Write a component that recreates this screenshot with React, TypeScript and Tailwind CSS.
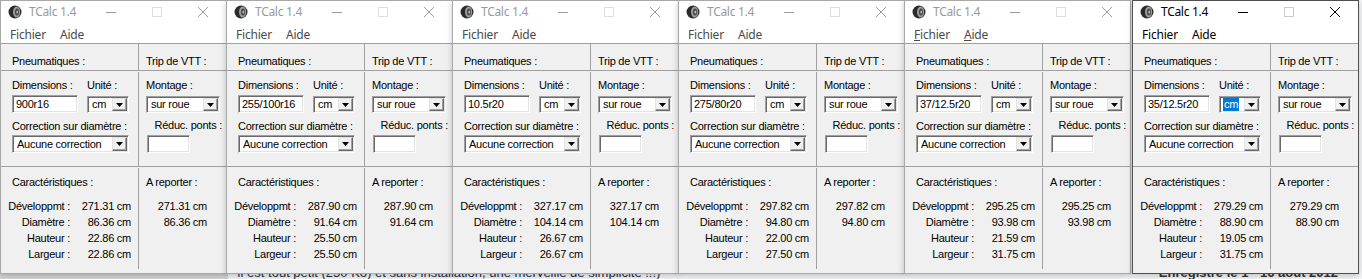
import clsx from 'clsx'

interface TyreWindow {
  dim: string
  dev: string
  diam: string
  haut: string
  larg: string
}

const windows: TyreWindow[] = [
  { dim: '900r16', dev: '271.31', diam: '86.36', haut: '22.86', larg: '22.86' },
  { dim: '255/100r16', dev: '287.90', diam: '91.64', haut: '25.50', larg: '25.50' },
  { dim: '10.5r20', dev: '327.17', diam: '104.14', haut: '26.67', larg: '26.67' },
  { dim: '275/80r20', dev: '297.82', diam: '94.80', haut: '22.00', larg: '27.50' },
  { dim: '37/12.5r20', dev: '295.25', diam: '93.98', haut: '21.59', larg: '31.75' },
  { dim: '35/12.5r20', dev: '279.29', diam: '88.90', haut: '19.05', larg: '31.75' },
]

const sunken =
  'border border-[#a0a0a0] border-b-white border-r-white bg-white shadow-[inset_1px_1px_0_#696969,inset_-1px_-1px_0_#e3e3e3]'

function TyreIcon() {
  return (
    <svg width="14" height="14" viewBox="0 0 14 14">
      <circle cx="7" cy="7" r="6.5" fill="#2a2a2a" />
      <ellipse cx="8.6" cy="7" rx="3.6" ry="5.6" fill="#9c9c9c" />
      <ellipse cx="9" cy="7" rx="2.1" ry="3.6" fill="#4a4a4a" />
      <ellipse cx="9.3" cy="7" rx="0.9" ry="1.6" fill="#bdbdbd" />
    </svg>
  )
}

function Arrow() {
  return (
    <div className="flex w-[15px] items-center justify-center border border-[#e3e3e3] border-b-[#696969] border-r-[#696969] bg-[#f0f0f0] shadow-[inset_-1px_-1px_0_#a0a0a0]">
      <svg width="7" height="4" viewBox="0 0 7 4">
        <path d="M0 0h7L3.5 4z" fill="#000" />
      </svg>
    </div>
  )
}

function Select({ value, width, height, focused }: { value: string; width: string; height: string; focused?: boolean }) {
  return (
    <div className={clsx('flex p-px', sunken, width, height)}>
      <div className="flex flex-1 items-center pl-[2px]">
        <span className={clsx('px-[1px] leading-[13px]', focused && 'bg-[#0078d7] text-white')}>{value}</span>
      </div>
      <Arrow />
    </div>
  )
}

function VLine() {
  return <div className="w-[2px] shrink-0 border-l border-[#a0a0a0] border-r-white" />
}

function HLine() {
  return <div className="h-[2px] shrink-0 border-t border-[#a0a0a0] border-b-white" />
}

function Window({ w, active, mnemonics, className }: { w: TyreWindow; active?: boolean; mnemonics?: boolean; className?: string }) {
  const rows = [
    ['Développmt :', w.dev],
    ['Diamètre :', w.diam],
    ['Hauteur :', w.haut],
    ['Largeur :', w.larg],
  ]

  return (
    <div
      className={clsx(
        'flex h-[274px] w-[227px] shrink-0 flex-col border bg-white shadow-[0_2px_6px_rgba(0,0,0,0.22)]',
        active ? 'border-[#505050]' : 'border-[#a8a8a8]',
        className,
      )}
    >
      {/* Title bar */}
      <div className="flex h-[22px] items-center font-['Noto_Sans',sans-serif] text-[12px] tracking-[-0.3px]">
        <div className="ml-[7px]">
          <TyreIcon />
        </div>
        <span className={clsx('ml-[7px]', active ? 'text-black' : 'text-[#9a9a9a]')}>TCalc 1.4</span>
        <div className="ml-auto flex h-full">
          <div className="flex w-[46px] items-center justify-center">
            <div className={clsx('h-px w-[10px]', active ? 'bg-black' : 'bg-[#9a9a9a]')} />
          </div>
          <div className="flex w-[46px] items-center justify-center">
            <div className={clsx('size-[10px] border', active ? 'border-[#cccccc]' : 'border-[#dddddd]')} />
          </div>
          <div className="flex w-[46px] items-center justify-center">
            <svg width="10" height="10" viewBox="0 0 10 10">
              <path d="M0 0L10 10M10 0L0 10" stroke={active ? '#000' : '#9a9a9a'} strokeWidth="1" />
            </svg>
          </div>
        </div>
      </div>

      {/* Menu */}
      <div
        className={clsx(
          "flex h-[20px] items-center gap-[14px] pl-[9px] pt-[3px] font-['Noto_Sans',sans-serif] text-[12px] tracking-[-0.2px]",
          active ? 'text-black' : 'text-[#4a4a4a]',
        )}
      >
        <span>
          <span className={clsx(mnemonics && 'underline')}>F</span>ichier
        </span>
        <span>
          <span className={clsx(mnemonics && 'underline')}>A</span>ide
        </span>
      </div>

      {/* Client */}
      <div className="flex flex-1 flex-col border-t border-[#a0a0a0] bg-[#f0f0f0] font-['Liberation_Sans',Arial,sans-serif] text-[11px] leading-[13px] tracking-[-0.25px] text-black">
        <div className="flex h-[26px]">
          <div className="w-[137px] pl-[11px] pt-[11px]">Pneumatiques :</div>
          <VLine />
          <div className="flex-1 pl-[6px] pt-[11px]">Trip de VTT :</div>
        </div>
        <HLine />
        <div className="flex h-[94px]">
          <div className="flex w-[137px] flex-col pl-[11px] pt-[7px]">
            <div className="flex">
              <span className="w-[75px]">Dimensions :</span>
              <span>Unité :</span>
            </div>
            <div className="mt-[3px] flex items-start">
              <div className={clsx('flex h-[18px] w-[66px] items-center pl-[3px]', sunken)}>{w.dim}</div>
              <div className="ml-[9px] mt-px">
                <Select value="cm" width="w-[42px]" height="h-[17px]" focused={active} />
              </div>
            </div>
            <div className="mt-[7px]">Correction sur diamètre :</div>
            <div className="mt-[2px]">
              <Select value="Aucune correction" width="w-[117px]" height="h-[18px]" />
            </div>
          </div>
          <VLine />
          <div className="flex flex-1 flex-col pt-[7px]">
            <div className="pl-[6px]">Montage :</div>
            <div className="mt-[4px] pl-[6px]">
              <Select value="sur roue" width="w-[74px]" height="h-[17px]" />
            </div>
            <div className="mt-[6px] pr-[4px] text-right">Réduc. ponts :</div>
            <div className={clsx('ml-[7px] mt-[3px] h-[18px] w-[43px]', sunken)} />
          </div>
        </div>
        <HLine />
        <div className="flex flex-1">
          <div className="w-[137px] pt-[8px]">
            <div className="pl-[11px]">Caractéristiques :</div>
            <div className="mt-[9px] flex flex-col">
              {rows.map(([label, value]) => (
                <div key={label} className="flex h-[16px] items-center">
                  <span className="w-[69px] text-right">{label}</span>
                  <span className="w-[61px] text-right">{value} cm</span>
                </div>
              ))}
            </div>
          </div>
          <div className="mb-[4px] w-[2px] shrink-0 border-l border-[#a0a0a0] border-r-white" />
          <div className="flex-1 pt-[8px]">
            <div className="pl-[6px]">A reporter :</div>
            <div className="mt-[9px] flex flex-col">
              <div className="flex h-[16px] items-center">
                <span className="w-[67px] text-right">{w.dev} cm</span>
              </div>
              <div className="flex h-[16px] items-center">
                <span className="w-[67px] text-right">{w.diam} cm</span>
              </div>
            </div>
          </div>
        </div>
      </div>
    </div>
  )
}

export default function App() {
  return (
    <div className="flex h-[279px] w-[1362px] flex-col overflow-hidden bg-[#f5f6f8]">
      <div className="relative z-10 flex h-[274px] shrink-0 items-start">
        {windows.map((w, i) => (
          <Window
            key={w.dim}
            w={w}
            active={i === 5}
            mnemonics={i === 4}
            className={i === 0 ? '' : i === 5 ? 'ml-px' : '-ml-px'}
          />
        ))}
      </div>
      <div className="-mt-[8px] flex h-[13px] shrink-0 font-['Liberation_Sans',Arial,sans-serif] text-[13px] leading-[13px] text-[#1c2b4a]">
        <div className="w-[228px] bg-[#d6d6d6]" />
        <span className="ml-[9px]">Il est tout petit (250 Ko) et sans installation, une merveille de simplicité !!!)</span>
        <span className="ml-auto mr-[24px] font-bold text-[#333]">Enregistré le 1 - 16 août 2012</span>
      </div>
    </div>
  )
}
